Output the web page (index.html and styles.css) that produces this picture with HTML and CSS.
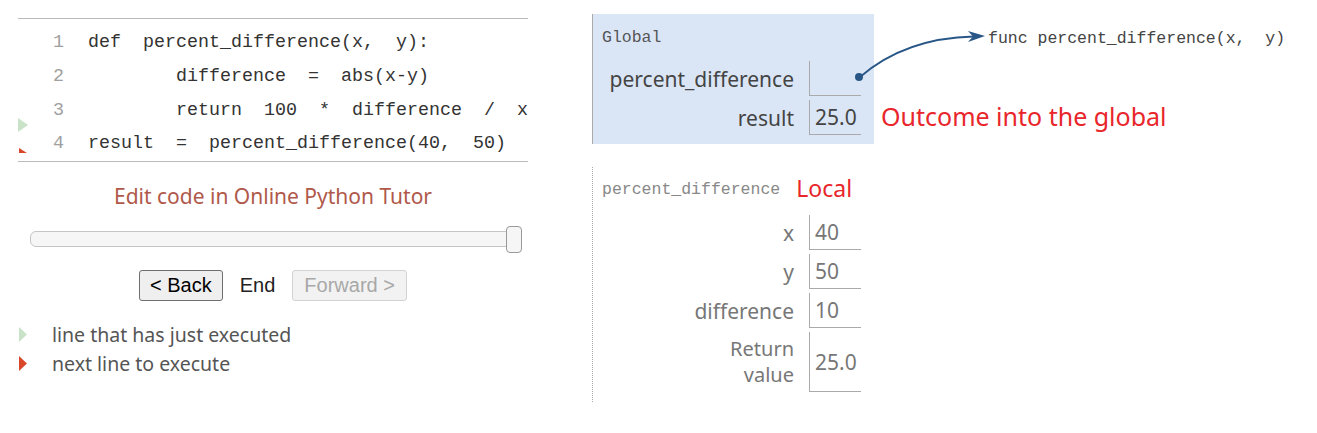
FILE: index.html
```html
<!DOCTYPE html>
<html>
<head>
<meta charset="utf-8">
<link rel="stylesheet" href="styles.css">
</head>
<body>
<div class="page">
  <div class="left">
    <div class="code">
      <svg class="gut gut-green" width="10" height="14" viewBox="0 0 10 14"><polygon points="0,0 10,7 0,14" fill="#c8e3c8"/></svg>
      <svg class="gut gut-red" width="8" height="5" viewBox="0 0 8 5"><polygon points="0,0 0,5 8,5" fill="#d9472b"/></svg>
      <div class="line"><span class="ln">1</span><span class="src">def  percent_difference(x,  y):</span></div>
      <div class="line"><span class="ln">2</span><span class="src">        difference  =  abs(x-y)</span></div>
      <div class="line"><span class="ln">3</span><span class="src">        return  100  *  difference  /  x</span></div>
      <div class="line"><span class="ln">4</span><span class="src">result  =  percent_difference(40,  50)</span></div>
    </div>
    <div class="edit">Edit code in Online Python Tutor</div>
    <div class="slider"><div class="track"></div><div class="handle"></div></div>
    <div class="controls">
      <button class="btn">&lt; Back</button>
      <span class="end">End</span>
      <button class="btn" disabled>Forward &gt;</button>
    </div>
    <div class="legend">
      <div class="legend-row"><svg width="8" height="15" viewBox="0 0 8 15"><polygon points="0,0 8,7.5 0,15" fill="#c8e3c8"/></svg><span>line that has just executed</span></div>
      <div class="legend-row"><svg width="8" height="15" viewBox="0 0 8 15"><polygon points="0,0 8,7.5 0,15" fill="#d9472b"/></svg><span>next line to execute</span></div>
    </div>
  </div>
  <div class="right">
    <div class="global-row">
      <div class="frame global">
        <div class="frame-head">Global</div>
        <div class="vars">
          <div class="name">percent_difference</div><div class="val"></div>
          <div class="name">result</div><div class="val">25.0</div>
        </div>
      </div>
      <div class="side">
        <div class="func">func percent_difference(x,  y)</div>
        <div class="note">Outcome into the global</div>
      </div>
    </div>
    <div class="frame local">
      <div class="frame-head"><span class="fname">percent_difference</span><span class="local-tag">Local</span></div>
      <div class="vars">
        <div class="name">x</div><div class="val">40</div>
        <div class="name">y</div><div class="val">50</div>
        <div class="name">difference</div><div class="val">10</div>
        <div class="name ret">Return<br>value</div><div class="val tall">25.0</div>
      </div>
    </div>
  </div>
  <svg class="pointer" width="1317" height="433" viewBox="0 0 1317 433">
    <path d="M860 77 Q905 38 974 36.5" fill="none" stroke="#285686" stroke-width="1.8"/>
    <polygon points="985,36 968,31 973,36.5 968,42" fill="#285686"/>
    <circle cx="859" cy="77" r="4" fill="#285686"/>
  </svg>
</div>
</body>
</html>
```

FILE: styles.css
```css
html, body {
  margin: 0;
  background: #fff;
}

.page {
  position: relative;
  display: flex;
  gap: 64px;
  width: 1317px;
  height: 433px;
  box-sizing: border-box;
  padding-left: 18px;
  overflow: hidden;
}

.left {
  width: 510px;
  padding-top: 18px;
}

.code {
  position: relative;
  border-top: 1px solid #bbb;
  border-bottom: 1px solid #bbb;
  padding-top: 7px;
  font-family: "Liberation Mono", monospace;
  font-size: 18.33px;
}

.line {
  display: flex;
  align-items: center;
  height: 33.67px;
  white-space: pre;
}

.ln {
  width: 46px;
  text-align: right;
  color: #a0a0a0;
}

.src {
  margin-left: 24px;
  color: #333;
}

.gut {
  position: absolute;
}

.gut-green {
  left: 0;
  top: 99px;
}

.gut-red {
  left: 1px;
  top: 129px;
}

.edit {
  margin-top: 22px;
  text-align: center;
  font-family: "Noto Sans", sans-serif;
  font-size: 21px;
  line-height: 24px;
  color: #b0594b;
}

.slider {
  position: relative;
  margin: 18px 0 0 12px;
  padding-top: 5px;
  width: 492px;
  height: 27px;
  box-sizing: border-box;
}

.track {
  height: 16px;
  box-sizing: border-box;
  border: 1px solid #c5c5c5;
  border-radius: 6px;
  background: #f6f6f6;
}

.handle {
  position: absolute;
  right: 0;
  top: 0;
  width: 16px;
  height: 27px;
  box-sizing: border-box;
  border: 1px solid #999;
  border-radius: 4px;
  background: #f6f6f6;
}

.controls {
  margin-top: 17px;
  display: flex;
  justify-content: center;
  align-items: center;
  gap: 17px;
}

.btn {
  height: 31px;
  box-sizing: border-box;
  padding: 0 10px;
  font-family: "Liberation Sans", Arial, sans-serif;
  font-size: 20px;
  color: #000;
  background: #efefef;
  border: 1px solid #6f6f6f;
  border-radius: 3px;
}

.btn:disabled {
  padding: 0 11px;
  color: #a8a8a8;
  background: #f2f2f2;
  border-color: #d2d2d2;
}

.end {
  font-family: "Liberation Sans", Arial, sans-serif;
  font-size: 20px;
  color: #222;
}

.legend {
  margin-top: 19px;
}

.legend-row {
  display: flex;
  align-items: center;
  height: 29px;
  font-family: "Noto Sans", sans-serif;
  font-size: 19.5px;
  color: #555;
}

.legend-row svg {
  margin-left: 1px;
}

.legend-row span {
  margin-left: 25px;
}

.right {
  padding-top: 14px;
  display: flex;
  flex-direction: column;
}

.global-row {
  display: flex;
}

.frame {
  width: 282px;
  box-sizing: border-box;
  padding: 14px 13px 9px 9px;
}

.global {
  background: #dae6f6;
  border-left: 1px solid #aaa;
}

.frame-head {
  height: 20px;
  font-family: "Liberation Mono", monospace;
  font-size: 16.5px;
  line-height: 20px;
  color: #555;
  white-space: pre;
}

.vars {
  margin-top: 13px;
  display: grid;
  grid-template-columns: 1fr 52px;
  column-gap: 15px;
  row-gap: 4px;
}

.name {
  align-self: center;
  text-align: right;
  font-family: "Noto Sans", sans-serif;
  font-size: 21px;
  line-height: 26px;
  color: #444;
}

.name.ret {
  font-size: 20px;
}

.val {
  height: 35px;
  box-sizing: border-box;
  display: flex;
  align-items: center;
  padding-left: 5px;
  border-left: 1px solid #aaa;
  border-bottom: 1px solid #aaa;
  font-family: "Noto Sans", sans-serif;
  font-size: 21px;
  color: #444;
}

.val.tall {
  height: 60px;
}

.side {
  display: flex;
  flex-direction: column;
  justify-content: space-between;
  padding: 15px 0 13px 7px;
}

.func {
  margin-left: 107px;
  font-family: "Liberation Mono", monospace;
  font-size: 16.5px;
  line-height: 20px;
  color: #444;
  white-space: pre;
}

.note {
  font-family: "Noto Sans", sans-serif;
  font-size: 25px;
  line-height: 30px;
  color: #e8262b;
}

.local {
  margin-top: 23px;
  border-left: 1px dotted #aaa;
  padding: 13px 13px 10px 9px;
}

.local .frame-head {
  display: flex;
  align-items: center;
}

.fname {
  color: #888;
}

.local-tag {
  margin-left: 16px;
  margin-top: -4px;
  font-family: "Noto Sans", sans-serif;
  font-size: 23px;
  line-height: 20px;
  color: #e8262b;
}

.local .vars {
  margin-top: 15px;
}

.local .name,
.local .val {
  color: #777;
}

.pointer {
  position: absolute;
  left: 0;
  top: 0;
  pointer-events: none;
}
```
